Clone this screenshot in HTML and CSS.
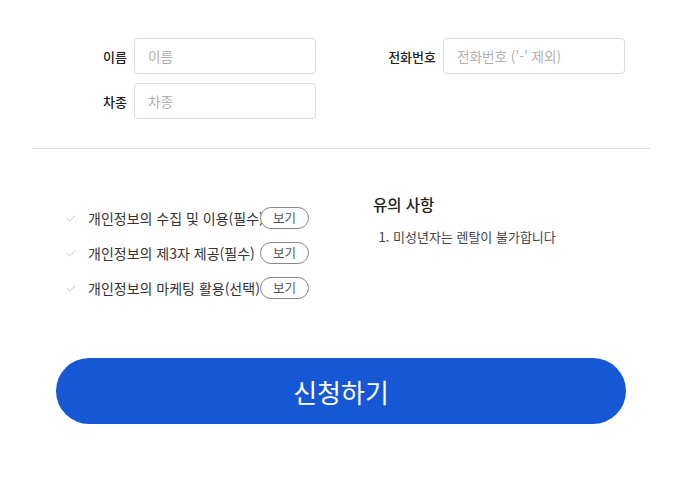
FILE: index.html
```html
<!DOCTYPE html>
<html lang="ko">
<head>
<meta charset="utf-8">
<link rel="stylesheet" href="styles.css">
</head>
<body>
<div class="page">
  <div class="form">
    <div class="row">
      <div class="field">
        <label class="label label-short">이름</label>
        <input class="input" placeholder="이름">
      </div>
      <div class="field field-right">
        <label class="label label-long">전화번호</label>
        <input class="input" placeholder="전화번호 ('-' 제외)">
      </div>
    </div>
    <div class="row">
      <div class="field">
        <label class="label label-short">차종</label>
        <input class="input" placeholder="차종">
      </div>
    </div>
  </div>
  <hr class="divider">
  <div class="bottom">
    <ul class="agrees">
      <li class="agree">
        <svg class="check" width="10" height="7" viewBox="0 0 10 7"><path d="M0.8 3.2 L3.6 5.8 L9.2 0.8" fill="none" stroke="#c8c8c8" stroke-width="1"/></svg>
        <span class="agree-text">개인정보의 수집 및 이용(필수)</span>
        <button class="view">보기</button>
      </li>
      <li class="agree">
        <svg class="check" width="10" height="7" viewBox="0 0 10 7"><path d="M0.8 3.2 L3.6 5.8 L9.2 0.8" fill="none" stroke="#c8c8c8" stroke-width="1"/></svg>
        <span class="agree-text">개인정보의 제3자 제공(필수)</span>
        <button class="view">보기</button>
      </li>
      <li class="agree">
        <svg class="check" width="10" height="7" viewBox="0 0 10 7"><path d="M0.8 3.2 L3.6 5.8 L9.2 0.8" fill="none" stroke="#c8c8c8" stroke-width="1"/></svg>
        <span class="agree-text">개인정보의 마케팅 활용(선택)</span>
        <button class="view">보기</button>
      </li>
    </ul>
    <div class="notice">
      <h3 class="notice-title">유의 사항</h3>
      <ol class="notice-list">
        <li>미성년자는 렌탈이 불가합니다</li>
      </ol>
    </div>
  </div>
  <div class="submit-wrap">
    <button class="submit">신청하기</button>
  </div>
</div>
</body>
</html>
```
FILE: styles.css
```css
* { box-sizing: border-box; }
html, body { margin: 0; padding: 0; background: #fff; }
body {
  font-family: "Noto Sans CJK KR", "Noto Sans", sans-serif;
  color: #222;
  width: 682px;
  height: 479px;
  overflow: hidden;
}
.page { padding-top: 38px; }
.form {
  display: flex;
  flex-direction: column;
  gap: 9px;
  padding-left: 80px;
}
.row { display: flex; }
.field {
  display: flex;
  align-items: center;
  gap: 7px;
}
.field-right { margin-left: 60px; }
.label {
  font-size: 13px;
  font-weight: 500;
  color: #222;
  text-align: right;
}
.label-short { width: 47px; }
.label-long { width: 60px; }
.input {
  width: 182px;
  height: 36px;
  border: 1px solid #dcdcdc;
  border-radius: 4px;
  padding: 0 13px;
  font-family: inherit;
  font-size: 13.6px;
  color: #333;
  outline: none;
}
.input::placeholder { color: #b0b0b0; }
.divider {
  margin: 29px 32px 0;
  border: 0;
  border-top: 1px solid #dcdcdc;
  height: 0;
}
.bottom {
  display: flex;
  padding-top: 46px;
  padding-left: 66px;
}
.agrees {
  list-style: none;
  margin: 12px 0 0;
  padding: 0;
  width: 307px;
  display: flex;
  flex-direction: column;
  gap: 13px;
}
.agree {
  display: flex;
  align-items: center;
  height: 22px;
}
.check { margin-right: 12px; margin-top: 1px; flex: none; }
.agree-text {
  width: 172px;
  flex: none;
  white-space: nowrap;
  font-size: 14px;
  color: #333;
}
.view {
  flex: none;
  width: 49px;
  height: 22px;
  border: 1px solid #888;
  border-radius: 11px;
  background: #fff;
  font-family: inherit;
  font-size: 12.5px;
  color: #555;
  padding: 0;
  line-height: 20px;
}
.notice-title {
  margin: 0;
  font-size: 15.5px;
  font-weight: 500;
  color: #222;
  line-height: 18px;
}
.notice-list {
  margin: 15px 0 0;
  padding-left: 20px;
  font-size: 13px;
  color: #444;
  line-height: 17px;
}
.submit-wrap {
  padding: 0 56px;
  margin-top: 59px;
}
.submit {
  display: block;
  width: 100%;
  height: 66px;
  border: 0;
  border-radius: 33px;
  background: #1557d4;
  color: #fff;
  font-family: inherit;
  font-size: 26px;
  font-weight: 400;
}
```
